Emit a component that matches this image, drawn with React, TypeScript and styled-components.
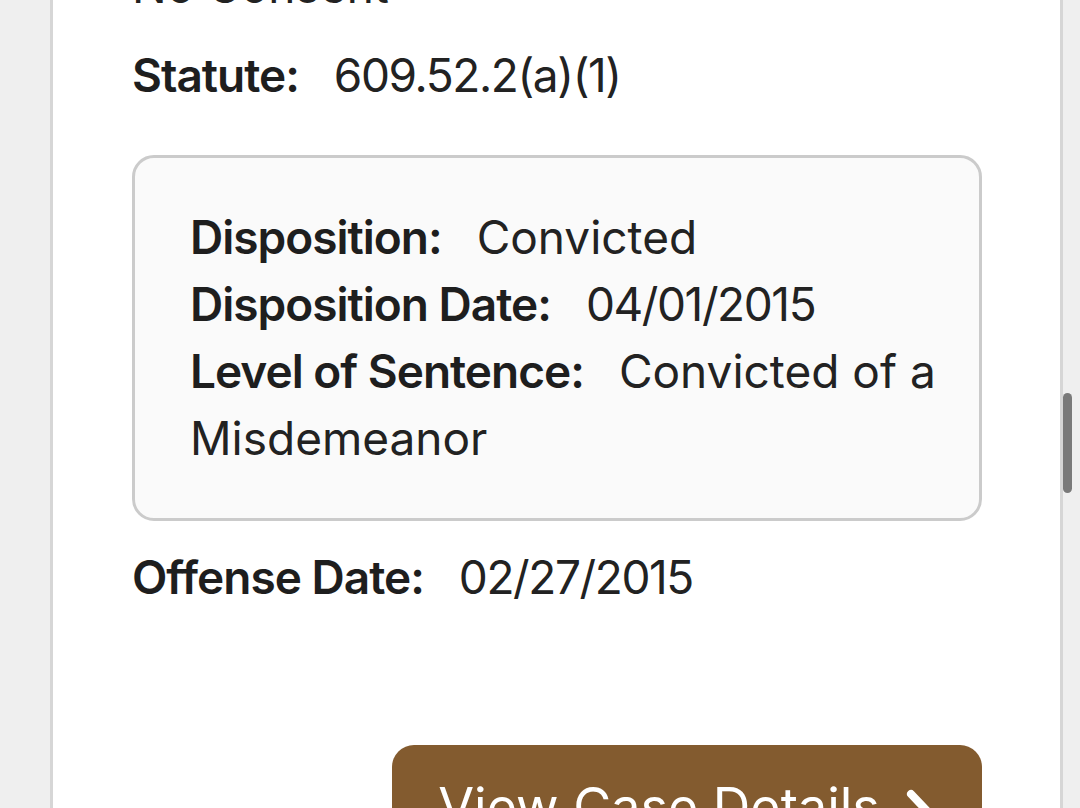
import React from "react";
import styled, { createGlobalStyle } from "styled-components";

const GlobalStyle = createGlobalStyle`
  html, body {
    margin: 0;
    padding: 0;
    height: 100%;
    background: #efefef;
    overflow: hidden;
  }
  body {
    font-family: Inter, "Noto Sans", "Liberation Sans", sans-serif;
    color: #222;
  }
`;

const Page = styled.div`
  position: relative;
  height: 808px;
  overflow: hidden;
  padding: 0 17px 0 50px;
`;

const Card = styled.div`
  background: #fff;
  border-left: 3px solid #d6d6d6;
  border-right: 3px solid #d6d6d6;
  min-height: 100%;
  padding: 0 78px 0 79px;
`;

const Line = styled.div<{ $gapAfter?: number }>`
  font-size: 46px;
  line-height: 67px;
  margin-bottom: ${(p) => p.$gapAfter ?? 0}px;
`;

const Label = styled.span`
  font-weight: 600;
  color: #1e1e1e;
  letter-spacing: -1px;
  margin-right: 35px;
`;

const Value = styled.span<{ $numeric?: boolean }>`
  font-weight: 400;
  color: #222;
  letter-spacing: ${(p) => (p.$numeric ? "-1.4px" : "0")};
`;

const DispositionBox = styled.div`
  background: #fafafa;
  border: 3px solid #cbcbcb;
  border-radius: 22px;
  padding: 46px 42px 46px 55px;
  margin-bottom: 23px;
`;

const ButtonRow = styled.div`
  display: flex;
  justify-content: flex-end;
  padding-top: 134px;
`;

const DetailsButton = styled.button`
  width: 590px;
  height: 120px;
  border: none;
  border-radius: 22px;
  background: #835b2f;
  color: #fff;
  font-family: Inter, "Noto Sans", sans-serif;
  font-size: 52px;
  font-weight: 400;
  display: flex;
  justify-content: center;
  align-items: flex-start;
  gap: 24px;
  padding-top: 30px;
`;

const Chevron = styled.svg`
  width: 32px;
  height: 54px;
  margin-top: 12px;
`;

const ScrollThumb = styled.div`
  position: absolute;
  left: 1063px;
  top: 393px;
  width: 9px;
  height: 100px;
  border-radius: 5px;
  background: #7a7a7a;
`;

function App() {
  return (
    <>
      <GlobalStyle />
      <Page>
        <Card>
          <Line style={{ marginTop: -47 }} $gapAfter={22}>
            <Value>No Consent</Value>
          </Line>
          <Line $gapAfter={46}>
            <Label>Statute:</Label>
            <Value $numeric>609.52.2(a)(1)</Value>
          </Line>
          <DispositionBox>
            <Line>
              <Label>Disposition:</Label>
              <Value>Convicted</Value>
            </Line>
            <Line>
              <Label>Disposition Date:</Label>
              <Value $numeric>04/01/2015</Value>
            </Line>
            <Line>
              <Label>Level of Sentence:</Label>
              <Value>Convicted of a Misdemeanor</Value>
            </Line>
          </DispositionBox>
          <Line>
            <Label>Offense Date:</Label>
            <Value $numeric>02/27/2015</Value>
          </Line>
          <ButtonRow>
            <DetailsButton>
              View Case Details
              <Chevron viewBox="0 0 32 54">
                <path
                  d="M7 7 L26 27 L7 47"
                  fill="none"
                  stroke="#fff"
                  strokeWidth="8"
                  strokeLinecap="round"
                  strokeLinejoin="round"
                />
              </Chevron>
            </DetailsButton>
          </ButtonRow>
        </Card>
        <ScrollThumb />
      </Page>
    </>
  );
}

export default App;
